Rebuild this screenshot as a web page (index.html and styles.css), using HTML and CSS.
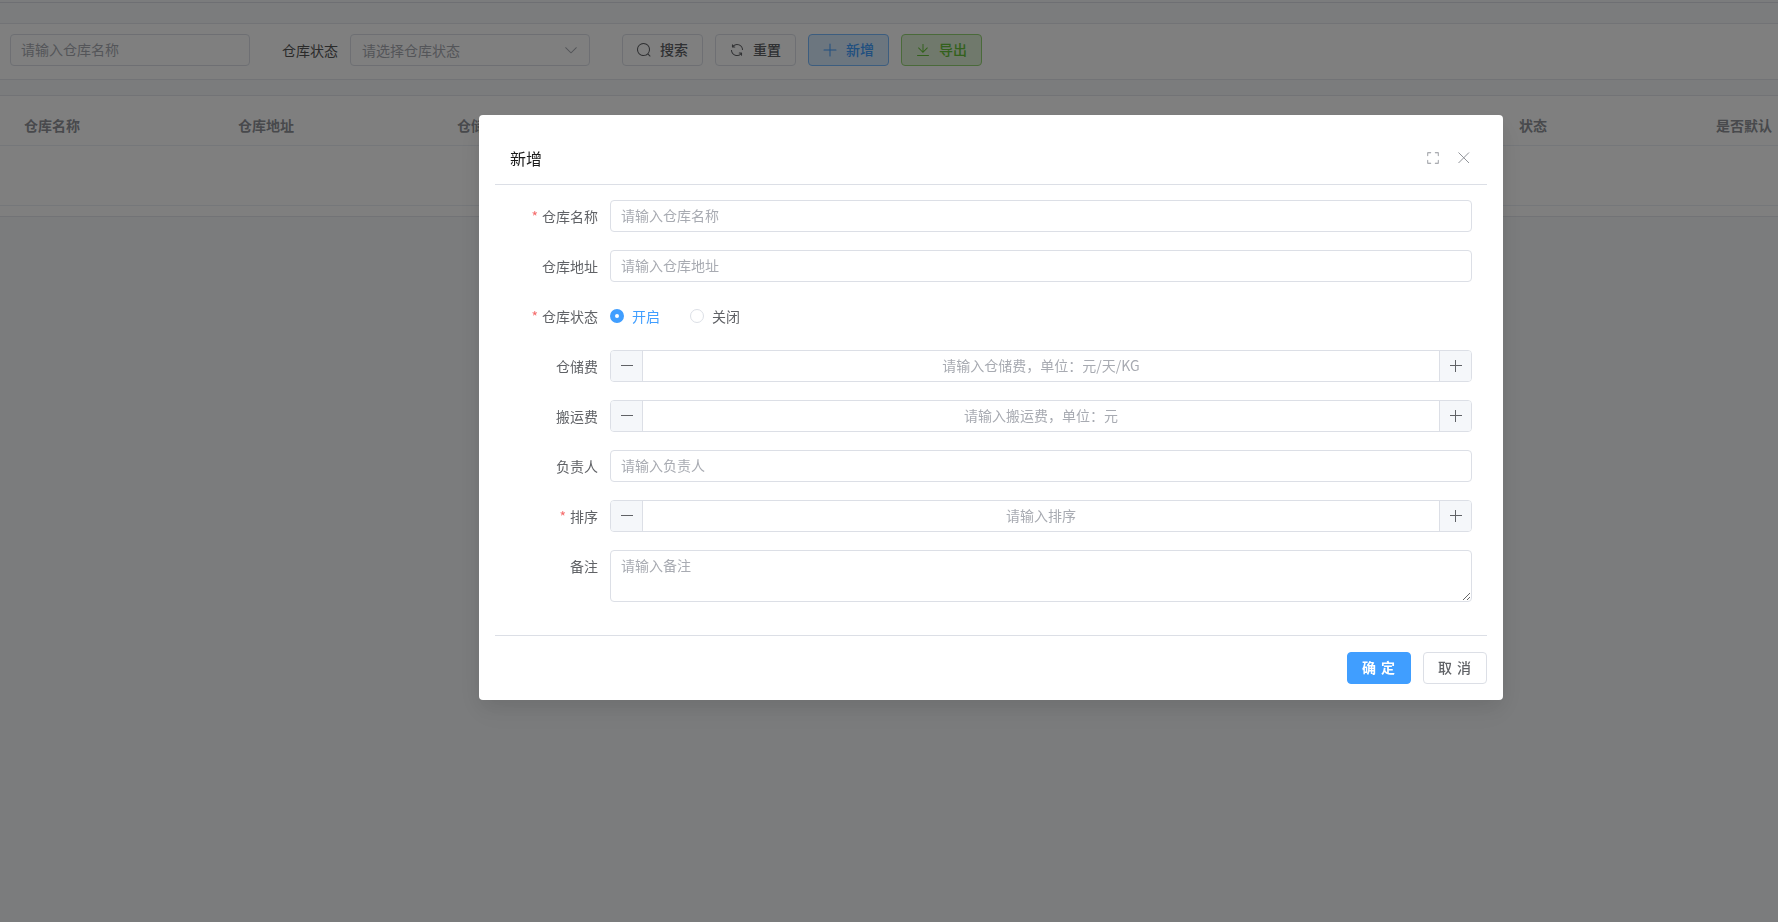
FILE: index.html
```html
<!DOCTYPE html>
<html>
<head>
  <meta charset="UTF-8">
  <link rel="stylesheet" href="styles.css">
</head>
<body>
  <div class="top-strip"></div>
  <div class="search-card">
    <input type="text" class="input search-name" placeholder="请输入仓库名称">
    <span class="search-label">仓库状态</span>
    <div class="select">
      <span class="select-text">请选择仓库状态</span>
      <svg class="icon select-arrow" viewBox="0 0 1024 1024"><path d="M831.872 340.864 512 652.672 192.128 340.864a30.592 30.592 0 0 0-42.752 0 29.12 29.12 0 0 0 0 41.6L489.664 714.24a32 32 0 0 0 44.672 0l340.288-331.712a29.12 29.12 0 0 0 0-41.728 30.592 30.592 0 0 0-42.752 0z"/></svg>
    </div>
    <div class="search-btns">
      <button class="btn">
        <svg class="icon" viewBox="0 0 1024 1024"><path d="m795.904 750.72 124.992 124.928a32 32 0 0 1-45.248 45.248L750.656 795.904a416 416 0 1 1 45.248-45.248zM480 832a352 352 0 1 0 0-704 352 352 0 0 0 0 704z"/></svg>
        <span>搜索</span>
      </button>
      <button class="btn">
        <svg class="icon" viewBox="0 0 1024 1024"><path d="M771.776 794.88A384 384 0 0 1 128 512h64a320 320 0 0 0 555.712 216.448H654.72a32 32 0 1 1 0-64h149.056a32 32 0 0 1 32 32v148.928a32 32 0 1 1-64 0v-50.56zM276.288 295.616h92.992a32 32 0 0 1 0 64H220.16a32 32 0 0 1-32-32V178.56a32 32 0 0 1 64 0v50.56A384 384 0 0 1 896.128 512h-64a320 320 0 0 0-555.776-216.384z"/></svg>
        <span>重置</span>
      </button>
      <button class="btn btn-blue">
        <svg class="icon" viewBox="0 0 1024 1024"><path d="M480 480V128a32 32 0 0 1 64 0v352h352a32 32 0 1 1 0 64H544v352a32 32 0 1 1-64 0V544H128a32 32 0 0 1 0-64h352z"/></svg>
        <span>新增</span>
      </button>
      <button class="btn btn-green">
        <svg class="icon" viewBox="0 0 1024 1024"><path d="M160 832h704a32 32 0 1 1 0 64H160a32 32 0 1 1 0-64zm384-253.696 236.288-236.352 45.248 45.248L508.8 704 192 387.2l45.248-45.248L480 584.704V128h64v450.304z"/></svg>
        <span>导出</span>
      </button>
    </div>
  </div>

  <div class="table-card">
    <div class="table-head">
      <div class="th col-name">仓库名称</div>
      <div class="th col-addr">仓库地址</div>
      <div class="th col-fee">仓储费</div>
      <div class="th col-status">状态</div>
      <div class="th col-default">是否默认</div>
    </div>
    <div class="table-empty"></div>
  </div>

  <div class="overlay"></div>

  <div class="dialog">
    <div class="dialog-header">
      <span class="dialog-title">新增</span>
      <svg class="icon dialog-expand" viewBox="0 0 1024 1024"><path d="m160 96.064 192 .192a32 32 0 0 1 0 64l-192-.192V352a32 32 0 0 1-64 0V96h64v.064zm0 831.872V928H96V672a32 32 0 1 1 64 0v191.936l192-.192a32 32 0 1 1 0 64l-192 .192zM864 96.064V96h64v256a32 32 0 1 1-64 0V160.064l-192 .192a32 32 0 1 1 0-64l192-.192zm0 831.872-192-.192a32 32 0 0 1 0-64l192 .192V672a32 32 0 1 1 64 0v256h-64v-.064z"/></svg>
      <svg class="dialog-close" viewBox="0 0 18 18"><path d="M3.5 3.5 14 14M14 3.5 3.5 14"/></svg>
    </div>

    <div class="dialog-body">
      <div class="form-row">
        <label class="form-label required">仓库名称</label>
        <input type="text" class="input form-control" placeholder="请输入仓库名称">
      </div>
      <div class="form-row">
        <label class="form-label">仓库地址</label>
        <input type="text" class="input form-control" placeholder="请输入仓库地址">
      </div>
      <div class="form-row">
        <label class="form-label required">仓库状态</label>
        <div class="radio-group">
          <span class="radio radio-on"><i class="radio-dot"></i>开启</span>
          <span class="radio"><i class="radio-dot"></i>关闭</span>
        </div>
      </div>
      <div class="form-row">
        <label class="form-label">仓储费</label>
        <div class="number form-control">
          <span class="number-btn number-minus"><svg class="step-icon" viewBox="0 0 16 16"><path d="M2 7.5h12"/></svg></span>
          <input type="text" class="number-input" placeholder="请输入仓储费，单位：元/天/KG">
          <span class="number-btn number-plus"><svg class="step-icon" viewBox="0 0 16 16"><path d="M2 7.5h12M7.5 2v12"/></svg></span>
        </div>
      </div>
      <div class="form-row">
        <label class="form-label">搬运费</label>
        <div class="number form-control">
          <span class="number-btn number-minus"><svg class="step-icon" viewBox="0 0 16 16"><path d="M2 7.5h12"/></svg></span>
          <input type="text" class="number-input" placeholder="请输入搬运费，单位：元">
          <span class="number-btn number-plus"><svg class="step-icon" viewBox="0 0 16 16"><path d="M2 7.5h12M7.5 2v12"/></svg></span>
        </div>
      </div>
      <div class="form-row">
        <label class="form-label">负责人</label>
        <input type="text" class="input form-control" placeholder="请输入负责人">
      </div>
      <div class="form-row">
        <label class="form-label required">排序</label>
        <div class="number form-control">
          <span class="number-btn number-minus"><svg class="step-icon" viewBox="0 0 16 16"><path d="M2 7.5h12"/></svg></span>
          <input type="text" class="number-input" placeholder="请输入排序">
          <span class="number-btn number-plus"><svg class="step-icon" viewBox="0 0 16 16"><path d="M2 7.5h12M7.5 2v12"/></svg></span>
        </div>
      </div>
      <div class="form-row form-row-tall">
        <label class="form-label">备注</label>
        <textarea class="textarea form-control" placeholder="请输入备注"></textarea>
      </div>
    </div>

    <div class="dialog-footer">
      <button class="footer-btn footer-ok">确 定</button>
      <button class="footer-btn">取 消</button>
    </div>
  </div>
</body>
</html>
```

FILE: styles.css
```css
* {
  box-sizing: border-box;
}
html, body {
  height: 100%;
}
body {
  margin: 0;
  background: #f7f8fa;
  color: #606266;
  font-family: "Noto Sans CJK SC", "Liberation Sans", sans-serif;
  font-size: 14px;
  overflow: hidden;
}
.icon {
  width: 16px;
  height: 16px;
  fill: currentColor;
  flex-shrink: 0;
}
.step-icon {
  width: 16px;
  height: 16px;
  fill: none;
  stroke: #606266;
  stroke-width: 1;
  flex-shrink: 0;
}
.top-strip {
  height: 3px;
  border-bottom: 1px solid #dcdfe6;
  margin-bottom: 20px;
}
.search-card {
  display: flex;
  align-items: flex-start;
  height: 57px;
  padding: 10px 10px 0;
  background: #fff;
  border-top: 1px solid #e4e7ed;
  border-bottom: 1px solid #e4e7ed;
}
.input {
  height: 32px;
  padding: 0 10px 2px;
  border: 1px solid #dcdfe6;
  border-radius: 4px;
  background: #fff;
  color: #606266;
  font: inherit;
  outline: none;
}
.input::placeholder, .number-input::placeholder, .textarea::placeholder {
  color: #a8abb2;
  opacity: 1;
}
.search-name {
  width: 240px;
}
.search-label {
  width: 68px;
  margin-left: 32px;
  line-height: 32px;
  color: #555;
}
.select {
  display: flex;
  align-items: center;
  justify-content: space-between;
  width: 240px;
  height: 32px;
  padding: 0 10px 1px 11px;
  border: 1px solid #dcdfe6;
  border-radius: 4px;
  background: #fff;
}
.select-text {
  color: #a8abb2;
}
.select-arrow {
  color: #a8abb2;
  margin-top: 1px;
}
.search-btns {
  display: flex;
  gap: 12px;
  margin-left: 32px;
}
.btn {
  display: flex;
  align-items: center;
  gap: 8px;
  width: 81px;
  height: 32px;
  padding: 0 0 2px 13px;
  border: 1px solid #dcdfe6;
  border-radius: 4px;
  background: #fff;
  color: #606266;
  font: inherit;
  font-weight: 500;
}
.btn .icon {
  margin-top: 2px;
}
.btn-blue {
  background: #d9ecff;
  border-color: #79bbff;
  color: #409eff;
}
.btn-green {
  background: #e1f3d8;
  border-color: #95d475;
  color: #67c23a;
}
.table-card {
  margin-top: 15px;
  background: #fff;
  border-top: 1px solid #e4e7ed;
  border-bottom: 1px solid #e4e7ed;
}
.table-head {
  display: flex;
  height: 50px;
  padding-top: 19px;
  border-bottom: 1px solid #ebeef5;
}
.th {
  padding-left: 24px;
  font-weight: 700;
  color: #909399;
  white-space: nowrap;
  line-height: 20px;
}
.col-name {
  width: 214px;
}
.col-addr {
  width: 219px;
}
.col-fee {
  width: 1062px;
}
.col-status {
  width: 197px;
}
.col-default {
  width: 86px;
}
.table-empty {
  height: 60px;
  border-bottom: 1px solid #ebeef5;
  margin-bottom: 10px;
}
.overlay {
  position: fixed;
  top: 0;
  left: 0;
  width: 100%;
  height: 100%;
  background: rgba(0, 0, 0, 0.5);
}
.dialog {
  position: fixed;
  top: 115px;
  left: 479px;
  width: 1024px;
  padding: 0 16px;
  background: #fff;
  border-radius: 4px;
  box-shadow: 0 12px 32px 4px rgba(0, 0, 0, 0.04), 0 8px 20px rgba(0, 0, 0, 0.08);
}
.dialog-header {
  display: flex;
  align-items: center;
  padding: 31px 14px 14px 15px;
  border-bottom: 1px solid #dcdfe6;
}
.dialog-title {
  flex: 1;
  font-size: 16px;
  line-height: 24px;
  color: #1a1a1a;
}
.dialog-expand {
  width: 14px;
  height: 14px;
  color: #909399;
}
.dialog-close {
  width: 18px;
  height: 18px;
  margin-left: 15px;
  fill: none;
  stroke: #909399;
  stroke-width: 1;
}
.dialog-body {
  padding: 15px 15px 15px 0;
  border-bottom: 1px solid #dcdfe6;
}
.form-row {
  display: flex;
  margin-bottom: 18px;
  height: 32px;
}
.form-row-tall {
  height: 52px;
}
.form-label {
  width: 115px;
  padding-right: 12px;
  line-height: 32px;
  text-align: right;
  color: #606266;
  flex-shrink: 0;
}
.form-label.required:before {
  content: "*";
  margin-right: 4px;
  color: #f56c6c;
}
.form-control {
  flex: 1;
  min-width: 0;
}
.radio-group {
  display: flex;
  align-items: center;
  gap: 30px;
}
.radio {
  display: flex;
  align-items: center;
  gap: 8px;
  color: #606266;
}
.radio-dot {
  display: block;
  width: 14px;
  height: 14px;
  border: 1px solid #dcdfe6;
  border-radius: 50%;
  background: #fff;
}
.radio-on {
  color: #409eff;
}
.radio-on .radio-dot {
  border: 5px solid #409eff;
}
.number {
  display: flex;
  height: 32px;
  border: 1px solid #dcdfe6;
  border-radius: 4px;
  overflow: hidden;
}
.number-btn {
  display: flex;
  align-items: center;
  justify-content: center;
  width: 32px;
  background: #f5f7fa;
  flex-shrink: 0;
}
.number-minus {
  border-right: 1px solid #dcdfe6;
}
.number-plus {
  border-left: 1px solid #dcdfe6;
}
.number-input {
  flex: 1;
  min-width: 0;
  padding: 0 11px 2px;
  border: none;
  outline: none;
  font: inherit;
  text-align: center;
}
.textarea {
  display: block;
  height: 52px;
  padding: 4px 10px;
  border: 1px solid #dcdfe6;
  border-radius: 4px;
  font: inherit;
  line-height: 1.5;
  outline: none;
  resize: vertical;
}
.dialog-footer {
  display: flex;
  justify-content: flex-end;
  gap: 12px;
  padding: 16px 0;
}
.footer-btn {
  width: 64px;
  height: 32px;
  padding: 0 0 2px;
  border: 1px solid #dcdfe6;
  border-radius: 4px;
  background: #fff;
  color: #606266;
  font: inherit;
  font-weight: 500;
  letter-spacing: 1px;
}
.footer-ok {
  background: #409eff;
  border-color: #409eff;
  color: #fff;
  font-weight: 700;
}
```
